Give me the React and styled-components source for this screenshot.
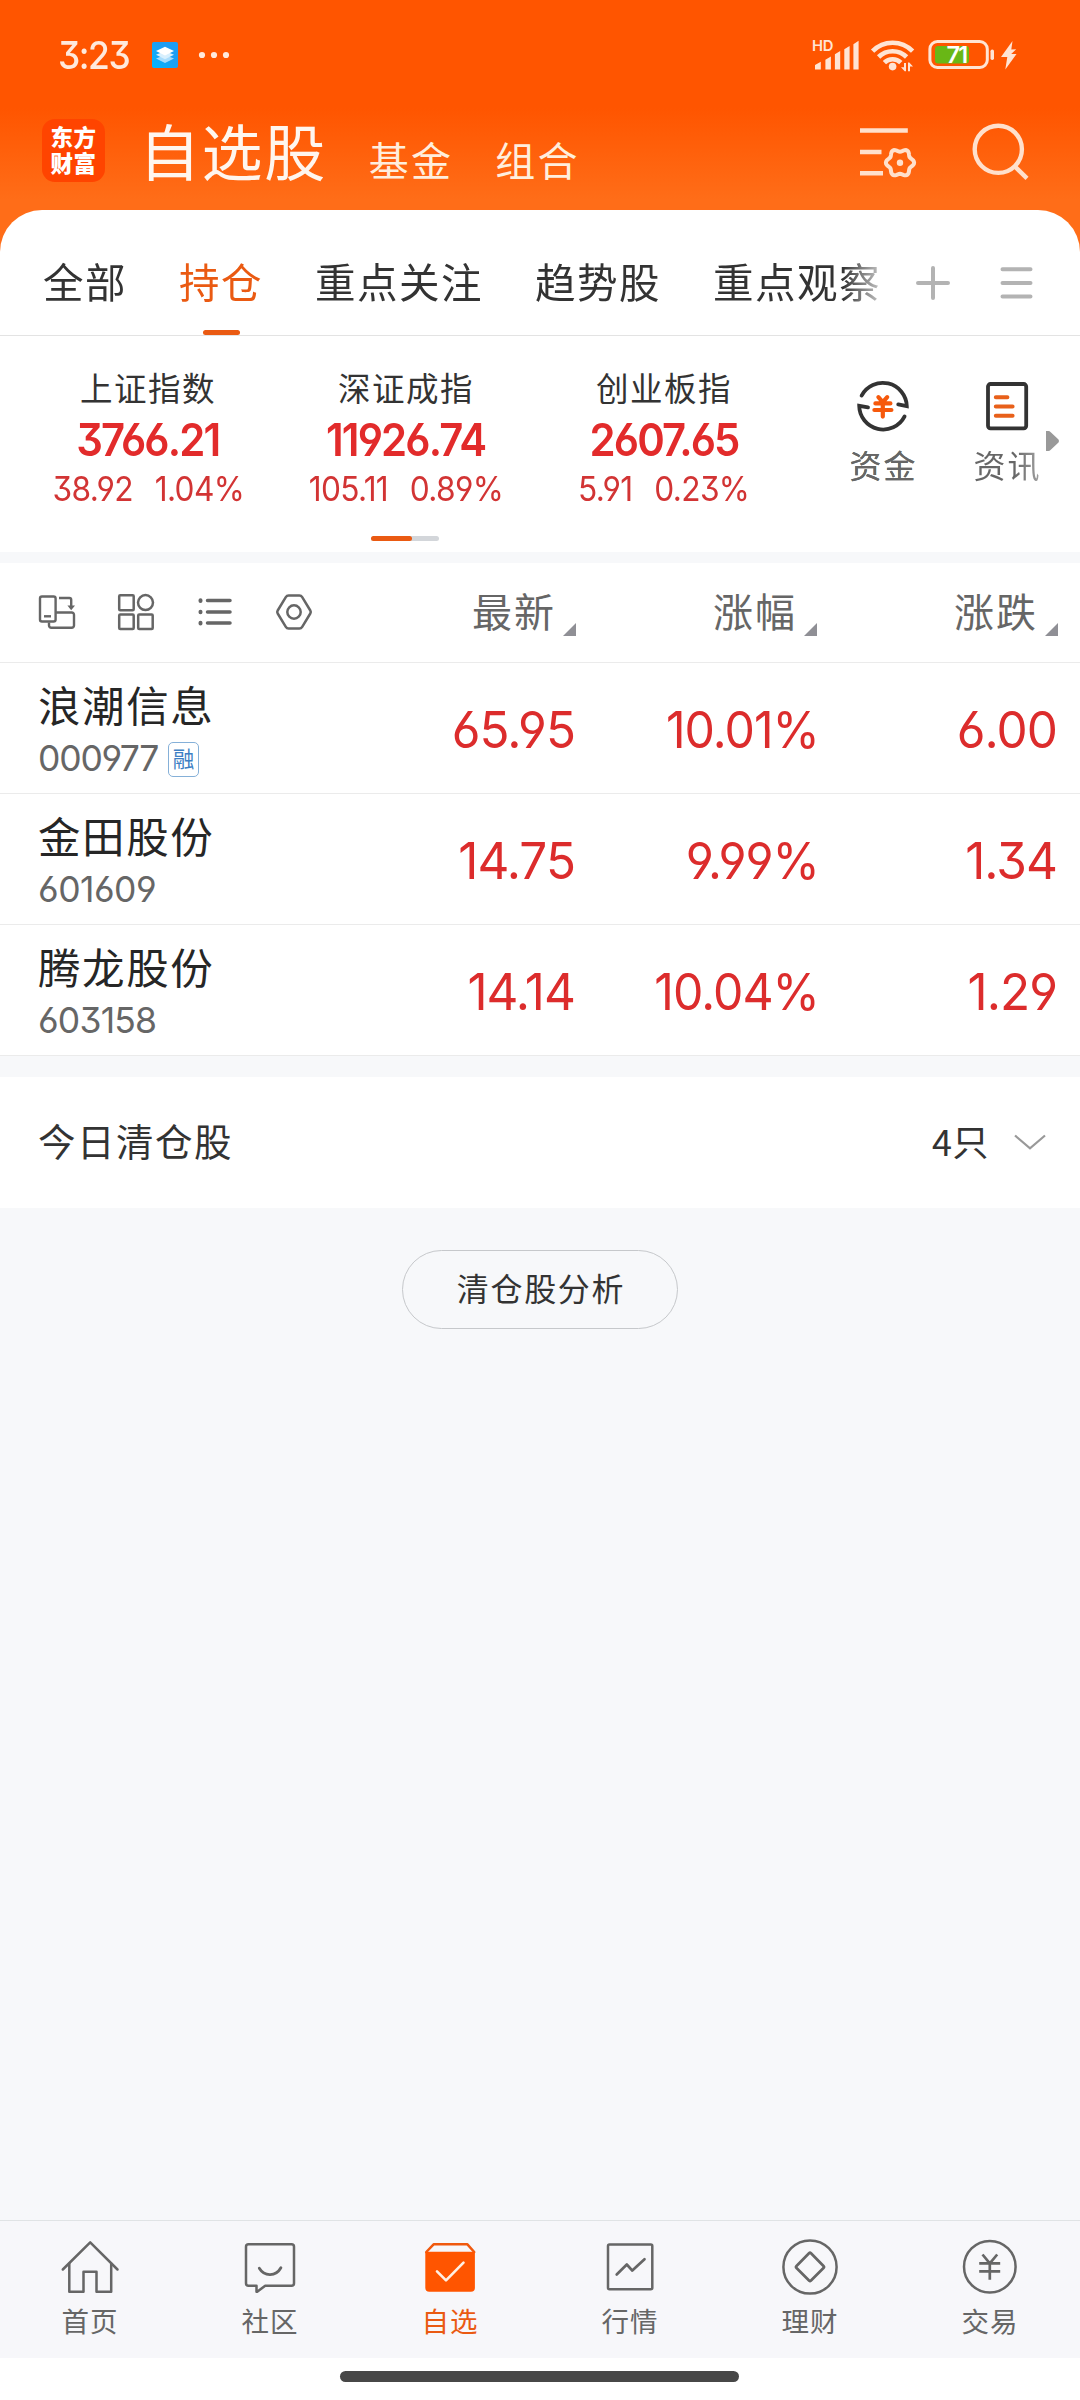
import React from "react";
import styled, { createGlobalStyle } from "styled-components";

const CJK = '"Noto Sans CJK SC", "Noto Sans", sans-serif';
const NUM = 'Inter, "Noto Sans CJK SC", sans-serif';
const ORANGE = "#ea5a12";

const GlobalStyle = createGlobalStyle`
  html, body { margin: 0; padding: 0; background: #f7f8fa; }
  * { box-sizing: border-box; }
  svg { display: block; flex: none; overflow: visible; }
`;

const Page = styled.div`
  width: 1080px;
  height: 2400px;
  display: flex;
  flex-direction: column;
  overflow: hidden;
  background: #f7f8fa;
  font-family: ${CJK};
  color: #333;
  white-space: nowrap;
`;

const Header = styled.header`
  height: 256px;
  flex: none;
  background: linear-gradient(#ff5500 0, #ff5500 108px, #ff6d18 200px, #ff6d18 100%);
`;

const StatusBar = styled.div`
  height: 110px;
  padding: 0 62px 0 58px;
  display: flex;
  align-items: center;
`;

const Clock = styled.span`
  width: 94px;
  font: 500 38.5px/40px ${NUM};
  font-feature-settings: "cv09", "cv03", "cv04";
  letter-spacing: -1.6px;
  transform: scaleX(0.92);
  transform-origin: 0 50%;
  color: #ffe9dc;
`;

const StatusRight = styled.div`
  display: flex;
  align-items: center;
  margin-left: auto;
`;

const SvgText = styled.text`
  font-family: ${NUM};
  font-weight: 600;
  font-size: ${(p) => p.$size}px;
  letter-spacing: ${(p) => p.$track || 0}px;
`;

const TitleRow = styled.div`
  height: 81px;
  padding: 0 51px 0 42px;
  display: flex;
  align-items: center;
`;

const Logo = styled.div`
  width: 63px;
  height: 63px;
  flex: none;
  border-radius: 13px;
  background: #ff4400;
  color: #fff;
  padding: 4px 8px 0 8.5px;
  font-weight: 900;
  font-size: 22.5px;
  line-height: 26px;
  letter-spacing: 0.5px;
  white-space: normal;
`;

const Sections = styled.nav`
  display: flex;
  align-items: baseline;
  margin-left: 34px;
  gap: 42px;
  height: 88px;
  line-height: 85px;
`;

const Section = styled.span`
  font-size: ${(p) => (p.$active ? 61 : 40)}px;
  letter-spacing: ${(p) => (p.$active ? 1.6 : 2.2)}px;
  color: ${(p) => (p.$active ? "#fff6ee" : "#ffeedd")};
`;

const HeaderTools = styled.div`
  display: flex;
  align-items: center;
  margin-left: auto;
  gap: 57px;
`;

const Sheet = styled.section`
  margin-top: -46px;
  height: 342px;
  flex: none;
  background: #fff;
  border-radius: 42px 42px 0 0;
`;

const TabBar = styled.div`
  height: 126px;
  display: flex;
  border-bottom: 1px solid #e3e3e3;
  padding-left: 43px;
`;

const TabList = styled.div`
  width: 838px;
  display: flex;
  gap: 52px;
  mask-image: linear-gradient(90deg, #000 800px, transparent 852px);
`;

const Tab = styled.div`
  display: flex;
  flex: none;
  flex-direction: column;
  align-items: center;
  justify-content: space-between;
  padding-top: 46px;
  font-size: 40.5px;
  line-height: 50px;
  letter-spacing: 1.5px;
  color: ${(p) => (p.$active ? ORANGE : "#333")};
  &::after {
    content: "";
    width: 37px;
    height: 5px;
    border-radius: 3px;
    background: ${(p) => (p.$active ? ORANGE : "transparent")};
  }
`;

const TabTools = styled.div`
  display: flex;
  gap: 48px;
  padding: 55px 0 0 34px;
`;

const IndexStrip = styled.div`
  height: 200px;
  display: flex;
  padding-left: 19px;
`;

const IndexCard = styled.div`
  width: 258px;
  display: flex;
  flex-direction: column;
  align-items: center;
  padding-top: 31px;
`;

const IndexName = styled.div`
  font-size: 32.5px;
  line-height: 40px;
  letter-spacing: 1.5px;
`;

const IndexValue = styled.div`
  margin-top: 8px;
  font: 600 45.5px/50px ${NUM};
  font-feature-settings: "cv09", "cv03", "cv04";
  letter-spacing: -2px;
  transform: scaleX(0.92);
  color: #e22b2b;
`;

const IndexChange = styled.div`
  margin-top: 4px;
  display: flex;
  gap: 23px;
  font: 400 33.5px/40px ${NUM};
  font-feature-settings: "cv09", "cv03", "cv04";
  letter-spacing: -0.7px;
  transform: scaleX(0.945);
  color: #d23434;
`;

const Shortcuts = styled.div`
  display: flex;
  align-items: flex-start;
  margin-left: 28px;
`;

const Shortcut = styled.div`
  width: 124px;
  display: flex;
  flex-direction: column;
  align-items: center;
  padding-top: 40px;
  font-size: 32px;
  line-height: 40px;
  letter-spacing: 2px;
  color: #666;
  gap: 8px;
`;

const FadeLabel = styled.span`
  padding-left: 1px;
  background: linear-gradient(90deg, #666 60%, #a5a5a5 100%);
  background-clip: text;
  color: ${(p) => (p.$fade ? "transparent" : "#666")};
`;

const NextArrow = styled.div`
  width: 14px;
  margin: 95px 0 0 -23px;
`;

const Pager = styled.div`
  height: 16px;
  display: flex;
  justify-content: flex-start;
  padding-left: 371px;
`;

const PagerTrack = styled.div`
  width: 68px;
  height: 5px;
  border-radius: 3px;
  background: #d3d6da;
  &::before {
    content: "";
    display: block;
    width: 41px;
    height: 5px;
    border-radius: 3px;
    background: ${ORANGE};
  }
`;

const Table = styled.section`
  margin-top: 11px;
  background: #fff;
  flex: none;
`;

const HeadRow = styled.div`
  display: grid;
  grid-template-columns: 335px 241px 241px 241px;
  height: 100px;
  border-bottom: 1px solid #ebebeb;
`;

const ViewTools = styled.div`
  display: flex;
  align-items: center;
  gap: 43px;
  padding: 0 0 2px 39px;
`;

const HeadCell = styled.div`
  display: flex;
  justify-content: flex-end;
  align-items: flex-end;
  padding-bottom: 26px;
  gap: 7px;
  color: #666;
  font-size: 40px;
  line-height: 50px;
  letter-spacing: 2px;
`;

const HeadLabel = styled.span`
  margin-bottom: 1px;
`;

const Corner = styled.i`
  width: 13px;
  height: 13px;
  background: #8f8f95;
  clip-path: polygon(100% 0, 100% 100%, 0 100%);
`;

const StockRow = styled.div`
  display: grid;
  grid-template-columns: 335px 241px 241px 241px;
  height: 131px;
  border-bottom: 1px solid #ebebeb;
`;

const StockId = styled.div`
  padding: 16px 0 0 38px;
`;

const StockName = styled.div`
  font-size: 42.5px;
  line-height: 50px;
  letter-spacing: 1.6px;
  color: #262626;
`;

const StockCode = styled.div`
  display: flex;
  align-items: center;
  gap: 10px;
  margin-top: 10px;
  height: 40px;
  font: 400 35.5px/40px ${NUM};
  font-feature-settings: "cv09", "cv03", "cv04";
  letter-spacing: ${(p) => p.$track}px;
  color: #666;
`;

const MarginTag = styled.span`
  width: 31px;
  height: 35px;
  border: 1.5px solid #85b0d8;
  border-radius: 5px;
  font: 400 21.5px/29px ${CJK};
  letter-spacing: 0;
  text-align: center;
  color: #3d7fc4;
`;

const Figure = styled.div`
  text-align: right;
  padding-top: 37px;
  font: 400 51px/60px ${NUM};
  font-feature-settings: "cv09", "cv03", "cv04";
  letter-spacing: -1px;
  color: #dc2c2c;
  transform: scaleX(${(p) => (p.$percent ? 0.945 : 0.97)});
  transform-origin: 100% 50%;
  margin-right: ${(p) => (p.$percent ? -2 : 1)}px;
`;

const ClearedRow = styled.section`
  margin-top: 21px;
  height: 131px;
  flex: none;
  background: #fff;
  display: flex;
  align-items: center;
  justify-content: space-between;
  padding: 0 34px 6px 38px;
  font-size: 37.5px;
  line-height: 50px;
  letter-spacing: 1.5px;
`;

const ClearedCount = styled.div`
  display: flex;
  align-items: center;
  gap: 25px;
  font-size: 36px;
  letter-spacing: 0.5px;
  & > svg { margin-top: 5px; }
`;

const Body = styled.main`
  flex: 1;
  display: flex;
  justify-content: center;
  align-items: flex-start;
  padding-top: 42px;
`;

const AnalysisButton = styled.button`
  width: 276px;
  height: 79px;
  padding: 0 0 5px 2px;
  border: 1.5px solid #c6c8cb;
  border-radius: 40px;
  background: transparent;
  font: 400 32px/40px ${CJK};
  letter-spacing: 1.7px;
  color: #333;
`;

const BottomNav = styled.nav`
  height: 138px;
  flex: none;
  display: grid;
  grid-template-columns: repeat(6, 180px);
  background: #f7f7fa;
  border-top: 1px solid #e0e3e5;
`;

const NavItem = styled.div`
  display: flex;
  flex-direction: column;
  align-items: center;
  padding-top: 17px;
  font-size: 27.5px;
  line-height: 40px;
  letter-spacing: 1px;
  color: ${(p) => (p.$active ? ORANGE : "#666")};
`;

const NavLabel = styled.span`
  margin-top: 2px;
`;

const GestureArea = styled.footer`
  height: 42px;
  flex: none;
  background: #fff;
  display: flex;
  justify-content: center;
  padding: 13px 1px 0 0;
`;

const GestureBar = styled.div`
  width: 399px;
  height: 11px;
  border-radius: 6px;
  background: #474747;
`;

const gearPath = (cx, cy) => {
  const pts = [];
  for (let i = 0; i < 72; i++) {
    const a = (i / 72) * Math.PI * 2;
    const r = 12.6 + 1.5 * Math.cos(6 * a);
    pts.push(`${(cx + r * Math.cos(a)).toFixed(2)} ${(cy + r * Math.sin(a)).toFixed(2)}`);
  }
  return `M${pts.join("L")}Z`;
};

const StackIcon = () => (
  <svg width="26" height="26" viewBox="0 0 26 26">
    <defs>
      <linearGradient id="stack" x1="0" y1="1" x2="1" y2="0">
        <stop offset="0" stopColor="#00b7ff" />
        <stop offset="0.6" stopColor="#1f9df2" />
      </linearGradient>
    </defs>
    <rect width="26" height="26" rx="2" fill="url(#stack)" />
    <path d="M4 16.5 13 13l9 3.500-9 4.500Z" fill="#a9dcfb" />
    <path d="M4 12.800 13 9l9 3.800-9 4.400Z" fill="#d7effd" />
    <path d="M4 9 13 4.800 22 9l-9 4.400Z" fill="#fff" />
  </svg>
);

const DotsSvg = styled.svg`
  margin-left: 20px;
`;

const MoreDots = () => (
  <DotsSvg width="32" height="8" viewBox="0 0 32 8" fill="#ffe9dc">
    <circle cx="4" cy="4" r="3.100" />
    <circle cx="16" cy="4" r="3.100" />
    <circle cx="28" cy="4" r="3.100" />
  </DotsSvg>
);

const StatusIcons = () => (
  <svg width="206" height="34" viewBox="812 38 206 34" fill="#ffe4d4">
    <SvgText x="812" y="50.800" $size={14.8} $track={-0.3}>HD</SvgText>
    <path d="M815 69.500v-4.500l5.800-3.200v7.700ZM825.400 69.500v-9.800l5.500-3.200v13ZM834.900 69.500v-15.300l5.300-3.200v18.500ZM844.300 69.500v-20.300l5.300-3.200v23.500ZM853.400 69.500v-25.300l5.200-3.400v28.700Z" />
    <g fill="none" stroke="#ffe4d4" strokeWidth="4.600">
      <path d="M872.600 51.200a28 28 0 0 1 40 0" />
      <path d="M878.600 57a19.800 19.800 0 0 1 28 0" />
      <path d="M884.400 62.600a11.600 11.600 0 0 1 16.400 0" />
    </g>
    <circle cx="892.600" cy="66.600" r="3.800" />
    <path d="M904 63h2v8.200h-1.300l-3.700-4h3ZM908 71.200v-8.600h1.300l3.700 4h-3v4.600Z" />
    <rect x="929.900" y="41.500" width="57.400" height="26" rx="7.500" fill="none" stroke="#ffe4d4" strokeWidth="3" />
    <rect x="935" y="46" width="34" height="17.400" rx="3" fill="#69b716" />
    <SvgText x="946.600" y="63.200" $size={23.5} $track={-1.9} fill="#fff">71</SvgText>
    <rect x="990.500" y="49.500" width="3.500" height="10.500" rx="1.700" />
    <path d="M1012.500 41 1001 57h6.300l-2 12.500L1016.500 54h-5.300l5-4.800-4.900.2Z" />
  </svg>
);

const FilterGearIcon = () => (
  <svg width="56" height="56" viewBox="861 122 56 56" fill="none" stroke="#ffe0cc" strokeWidth="4.400">
    <path d="M861 129.500h47.800M861 151h21.500M861 172.300h23" />
    <path d={gearPath(901, 161.7)} strokeWidth="4" />
    <circle cx="901" cy="161.700" r="3.200" fill="#ffe0cc" stroke="none" />
  </svg>
);

const SearchIcon = () => (
  <svg width="56" height="56" viewBox="973 122 56 56" fill="none" stroke="#ffe0cc" strokeWidth="4.400">
    <circle cx="998.300" cy="148.300" r="23.600" />
    <path d="M1014.500 165.200 1027 177.300" />
  </svg>
);

const PlusIcon = () => (
  <svg width="36" height="36" viewBox="0 0 36 36" stroke="#b3b3b3" strokeWidth="4" strokeLinecap="round">
    <path d="M3 18h30M18 3v30" />
  </svg>
);

const MenuIcon = () => (
  <svg width="34" height="36" viewBox="0 0 34 36" stroke="#b3b3b3" strokeWidth="4" strokeLinecap="round">
    <path d="M3.500 4.300h28M3.500 18h28M3.500 31.500h28" />
  </svg>
);

const FundsIcon = () => (
  <svg width="60" height="60" viewBox="853 376 60 60" fill="none">
    <g stroke="#333" strokeWidth="3.800" strokeLinecap="round" strokeLinejoin="miter">
      <path d="M861.600 395.600a24 24 0 0 1 45.200 10.600l-8.600-1.800" />
      <path d="M904.600 416.400a24 24 0 0 1-45.400-10.600l8.800 1.600" />
    </g>
    <g stroke="#f6590c" strokeWidth="4.200" strokeLinecap="round">
      <path d="M878.400 397.200l4.400 5 4.400-5M875.400 403.400h15M874.400 410h17M882.800 403v13.600" />
    </g>
  </svg>
);

const NewsIcon = () => (
  <svg width="60" height="60" viewBox="977 376 60 60" fill="none" strokeLinecap="round">
    <rect x="988" y="384" width="38.200" height="44.300" rx="2.500" stroke="#333" strokeWidth="3.800" />
    <path d="M995.800 397.300h11.600M995.800 406.600h16.800M995.800 415.800h16.800" stroke="#e8601a" strokeWidth="4" />
  </svg>
);

const RotateIcon = () => (
  <svg width="36" height="36" viewBox="39 594 36 36" fill="none" stroke="#666" strokeWidth="2.400">
    <rect x="40" y="596.500" width="15.600" height="25" rx="2" />
    <path d="M44 616.300h7" />
    <path d="M49 622.500v3a2.300 2.300 0 0 0 2.300 2.300h20.400a2.300 2.300 0 0 0 2.300-2.300v-10.700a2.300 2.300 0 0 0-2.300-2.300H56" />
    <path d="M59 598h10.400a1.800 1.800 0 0 1 1.800 1.800V607" />
    <path d="M67.400 605.400h7.600l-3.800 4.800Z" fill="#666" stroke="none" />
  </svg>
);

const GridIcon = () => (
  <svg width="36" height="36" viewBox="0 0 36 36" fill="none" stroke="#666" strokeWidth="2.500">
    <rect x="1.200" y="1.200" width="14.500" height="15" rx="1" />
    <circle cx="27.500" cy="8.600" r="7.500" />
    <rect x="1.200" y="20.600" width="14.500" height="14.500" rx="1" />
    <rect x="20.200" y="20.600" width="14.500" height="14.500" rx="1" />
  </svg>
);

const ListIcon = () => (
  <svg width="36" height="36" viewBox="0 0 36 36" stroke="#666" strokeWidth="3.500" strokeLinecap="round">
    <path d="M10.500 6.600h22.500M10.500 18h22.500M10.500 29.100h22.500" />
    <path d="M3.500 6.300v.6M3.500 17.700v.6M3.500 28.800v.6" strokeWidth="4" />
  </svg>
);

const HexIcon = () => (
  <svg width="36" height="36" viewBox="0 0 36 36" fill="none" stroke="#666" strokeWidth="2.500" strokeLinejoin="round">
    <path d="M9.800 3.200q1-1.600 2.800-1.600h10.800q1.800 0 2.800 1.600l8.100 13.300q.9 1.500 0 3l-8.100 13.300q-1 1.600-2.800 1.600H12.600q-1.800 0-2.800-1.600L1.700 19.500q-.9-1.500 0-3Z" />
    <circle cx="18" cy="18" r="6.700" />
  </svg>
);

const ChevronIcon = () => (
  <svg width="32" height="16" viewBox="0 0 32 16" fill="none" stroke="#999" strokeWidth="2.200">
    <path d="M1 1.500 16 14.300 31 1.500" />
  </svg>
);

const NavSvg = ({ children }) => (
  <svg width="60" height="60" viewBox="0 0 60 60" fill="none" stroke="#666" strokeWidth="2.500" strokeLinecap="round" strokeLinejoin="round">
    {children}
  </svg>
);

const navItems = [
  {
    label: "首页",
    icon: (
      <NavSvg>
        <path d="M2.800 31.500 30.200 4.300 57.500 31.500" />
        <path d="M9.300 25.800v27.900h14.200v-20h13v20h14.700V25.800" />
      </NavSvg>
    ),
  },
  {
    label: "社区",
    icon: (
      <NavSvg>
        <path d="M8.500 6.200h43a2.500 2.500 0 0 1 2.500 2.500v36.500a2.500 2.500 0 0 1-2.500 2.500H25.200l-8 6h-.7v-6h-8a2.500 2.500 0 0 1-2.500-2.500V8.700a2.500 2.500 0 0 1 2.500-2.500Z" />
        <path d="M19.300 30.300c5 8.400 16.600 8.400 21.600-.6" strokeWidth="2.800" />
      </NavSvg>
    ),
  },
  {
    label: "自选",
    active: true,
    icon: (
      <NavSvg>
        <path d="M6.300 14 13.600 6.300h33.800L54.200 14" stroke="#f0590e" />
        <path d="M5.300 13.800h49.600v36a4 4 0 0 1-4 4H9.300a4 4 0 0 1-4-4Z" fill="#ff5500" stroke="none" />
        <path d="M17 33.300 26 42.300 43.500 24.600" stroke="#fff0e4" strokeWidth="2.600" />
      </NavSvg>
    ),
  },
  {
    label: "行情",
    icon: (
      <NavSvg>
        <rect x="8" y="6.600" width="44.300" height="44.700" rx="1.500" />
        <path d="M16.700 36.500 26.800 26.500 32.300 32.600 44.500 21.200" strokeWidth="2.700" />
      </NavSvg>
    ),
  },
  {
    label: "理财",
    icon: (
      <NavSvg>
        <circle cx="30" cy="29" r="26.600" />
        <path d="M29 15.300q1-1 2 0L43.500 28q1 1 0 2L31 42.500q-1 1-2 0L16.500 30q-1-1 0-2Z" strokeWidth="2.700" />
      </NavSvg>
    ),
  },
  {
    label: "交易",
    icon: (
      <NavSvg>
        <circle cx="29.800" cy="28.700" r="25.800" />
        <path d="M22.500 16.500 29.800 25.300 37.200 16.500M19.200 25.300h21M19.200 33.300h21M29.800 25.300v16.500" strokeWidth="2.700" strokeLinecap="butt" />
      </NavSvg>
    ),
  },
];

const tabs = ["全部", "持仓", "重点关注", "趋势股", "重点观察"];

const indices = [
  { name: "上证指数", value: "3766.21", change: "38.92", pct: "1.04%" },
  { name: "深证成指", value: "11926.74", change: "105.11", pct: "0.89%" },
  { name: "创业板指", value: "2607.65", change: "5.91", pct: "0.23%" },
];

const stocks = [
  { name: "浪潮信息", code: "000977", track: -1.2, tag: "融", cells: ["65.95", "10.01%", "6.00"] },
  { name: "金田股份", code: "601609", track: -0.5, cells: ["14.75", "9.99%", "1.34"] },
  { name: "腾龙股份", code: "603158", track: -0.8, cells: ["14.14", "10.04%", "1.29"] },
];

export default function App() {
  return (
    <Page>
      <GlobalStyle />
      <Header>
        <StatusBar>
          <Clock>3:23</Clock>
          <StackIcon />
          <MoreDots />
          <StatusRight>
            <StatusIcons />
          </StatusRight>
        </StatusBar>
        <TitleRow>
          <Logo>东方财富</Logo>
          <Sections>
            <Section $active>自选股</Section>
            <Section>基金</Section>
            <Section>组合</Section>
          </Sections>
          <HeaderTools>
            <FilterGearIcon />
            <SearchIcon />
          </HeaderTools>
        </TitleRow>
      </Header>

      <Sheet>
        <TabBar>
          <TabList>
            {tabs.map((t) => (
              <Tab key={t} $active={t === "持仓"}>{t}</Tab>
            ))}
          </TabList>
          <TabTools>
            <PlusIcon />
            <MenuIcon />
          </TabTools>
        </TabBar>
        <IndexStrip>
          {indices.map((i) => (
            <IndexCard key={i.name}>
              <IndexName>{i.name}</IndexName>
              <IndexValue>{i.value}</IndexValue>
              <IndexChange>
                <span>{i.change}</span>
                <span>{i.pct}</span>
              </IndexChange>
            </IndexCard>
          ))}
          <Shortcuts>
            <Shortcut>
              <FundsIcon />
              <FadeLabel>资金</FadeLabel>
            </Shortcut>
            <Shortcut>
              <NewsIcon />
              <FadeLabel $fade>资讯</FadeLabel>
            </Shortcut>
            <NextArrow>
              <svg width="14" height="20" viewBox="0 0 14 20" fill="#999">
                <path d="M0 0h2.500q1.200 0 2 1l8 7.600q1 1.400 0 2.800l-8 7.600q-.8 1-2 1H0Z" />
              </svg>
            </NextArrow>
          </Shortcuts>
        </IndexStrip>
        <Pager>
          <PagerTrack />
        </Pager>
      </Sheet>

      <Table>
        <HeadRow>
          <ViewTools>
            <RotateIcon />
            <GridIcon />
            <ListIcon />
            <HexIcon />
          </ViewTools>
          {["最新", "涨幅", "涨跌"].map((h) => (
            <HeadCell key={h}>
              <HeadLabel>{h}</HeadLabel>
              <Corner />
            </HeadCell>
          ))}
        </HeadRow>
        {stocks.map((s) => (
          <StockRow key={s.code}>
            <StockId>
              <StockName>{s.name}</StockName>
              <StockCode $track={s.track}>
                {s.code}
                {s.tag && <MarginTag>{s.tag}</MarginTag>}
              </StockCode>
            </StockId>
            {s.cells.map((c) => (
              <Figure key={c} $percent={c.endsWith("%")}>{c}</Figure>
            ))}
          </StockRow>
        ))}
      </Table>

      <ClearedRow>
        <span>今日清仓股</span>
        <ClearedCount>
          <span>4只</span>
          <ChevronIcon />
        </ClearedCount>
      </ClearedRow>

      <Body>
        <AnalysisButton>清仓股分析</AnalysisButton>
      </Body>

      <BottomNav>
        {navItems.map((n) => (
          <NavItem key={n.label} $active={n.active}>
            {n.icon}
            <NavLabel>{n.label}</NavLabel>
          </NavItem>
        ))}
      </BottomNav>
      <GestureArea>
        <GestureBar />
      </GestureArea>
    </Page>
  );
}
